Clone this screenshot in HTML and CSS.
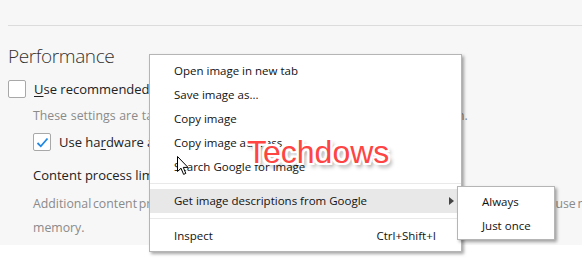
FILE: index.html
```html
<!DOCTYPE html>
<html lang="en">
<head>
    <meta charset="UTF-8">
    <title>Performance - Options</title>
    <link rel="stylesheet" href="styles.css">
</head>
<body>
    <div class="prefs">
        <div class="topbar"></div>

        <div class="content">
            <h2>Performance</h2>

            <label class="check-row first">
                <span class="box"></span>
                <span><u>U</u>se recommended performance settings</span>
            </label>
            <p class="hint single">These settings are tailored to your computer’s hardware and configuration.</p>

            <div class="sub">
                <label class="check-row">
                    <span class="box checked">
                        <svg width="13" height="11" viewBox="0 0 13 11"><path d="M1.5 6 L4.8 9.3 L11.5 1.5" fill="none" stroke="#1e88e5" stroke-width="1.8"/></svg>
                    </span>
                    <span>Use ha<u>r</u>dware acceleration when available</span>
                </label>

                <div class="label">Content process limit</div>
                <p class="hint wide">Additional content processes can improve performance when using multiple tabs, but will also use more memory.</p>
            </div>
        </div>
    </div>

    <div class="menu">
        <div class="item">Open image in new tab</div>
        <div class="item">Save image as...</div>
        <div class="item">Copy image</div>
        <div class="item">Copy image address</div>
        <div class="item">Search Google for image</div>
        <div class="sep"></div>
        <div class="item active">Get image descriptions from Google <span class="arrow"></span></div>
        <div class="sep"></div>
        <div class="item">Inspect <span class="key">Ctrl+Shift+I</span></div>
    </div>

    <div class="menu submenu">
        <div class="item">Always</div>
        <div class="item">Just once</div>
    </div>

    <div class="watermark">Techdows</div>

    <svg class="cursor" width="13" height="20" viewBox="0 0 13 20">
        <path d="M0.5 0.5 L0.5 15.5 L4 12.2 L6.6 18.4 L8.8 17.4 L6.3 11.4 L11 11.4 Z" fill="#fff" stroke="#000" stroke-width="1" stroke-linejoin="round"/>
    </svg>
</body>
</html>
```

FILE: styles.css
```css
body {
    margin: 0;
    width: 582px;
    height: 260px;
    overflow: hidden;
    position: relative;
    background: #fff;
    font-family: "Open Sans", "Noto Sans", sans-serif;
}
.prefs {
    width: 582px;
    height: 245px;
    overflow: hidden;
    background: #f7f7f7;
}
.topbar {
    height: 25px;
    margin-left: 8px;
    border-bottom: 1px solid #dcdcdc;
}
.content {
    padding-left: 8px;
}
h2 {
    margin: 0;
    padding-top: 16px;
    font-size: 19px;
    font-weight: 300;
    letter-spacing: -0.4px;
    line-height: 28px;
    color: #333;
}
.check-row {
    display: flex;
    align-items: center;
    gap: 8px;
    font-size: 13px;
    color: #222;
    height: 24px;
    margin-top: 2px;
    white-space: nowrap;
}
.check-row.first {
    margin-top: 7px;
}
.check-row u {
    text-decoration-thickness: 1px;
    text-underline-offset: 2px;
}
.box {
    width: 16px;
    height: 16px;
    border: 1px solid #a8a8a8;
    border-radius: 2px;
    background: #fff;
    display: flex;
    align-items: center;
    justify-content: center;
    flex: none;
}
.hint {
    margin: 3px 0 0;
    padding-left: 25px;
    font-size: 12.3px;
    line-height: 24px;
    color: #8a8a8a;
}
.hint.single {
    white-space: nowrap;
    word-spacing: 0.6px;
}
.sub {
    padding-left: 25px;
}
.sub .hint {
    padding-left: 0;
    margin-top: 5px;
}
.hint.wide {
    width: 590px;
    word-spacing: -1.5px;
}
.label {
    font-size: 13px;
    color: #222;
    margin-top: 9px;
    line-height: 24px;
}

.menu {
    position: absolute;
    left: 149px;
    top: 54px;
    width: 311px;
    padding: 4px 0 3px;
    background: #fff;
    border: 1px solid #b5b5b5;
    box-shadow: 2px 2px 3px rgba(0,0,0,0.35);
    font-size: 11.5px;
    color: #111;
    white-space: nowrap;
}
.item {
    height: 24px;
    line-height: 24px;
    padding: 0 25px 0 24px;
    display: flex;
    justify-content: space-between;
    align-items: center;
}
.item.active {
    background: #e8e8e9;
}
.sep {
    height: 1px;
    background: #e9e9e9;
    margin: 4px 0 5px;
}
.sep + .item.active + .sep {
    margin-top: 5px;
}
.arrow {
    width: 0;
    height: 0;
    border-left: 5px solid #444;
    border-top: 4px solid transparent;
    border-bottom: 4px solid transparent;
    margin-right: -18px;
}
.submenu {
    left: 457px;
    top: 186px;
    width: 96px;
    padding: 3px 0 1px;
}
.submenu .item {
    padding-left: 24px;
}
.watermark {
    position: absolute;
    left: 247px;
    top: 132px;
    font-family: "Liberation Sans", Arial, sans-serif;
    font-size: 32px;
    line-height: 40px;
    color: #ff4444;
    text-shadow:
        -2px -2px 0 #fff, 2px -2px 0 #fff, -2px 2px 0 #fff, 2px 2px 0 #fff,
        0 -2px 0 #fff, 0 2px 0 #fff, -2px 0 0 #fff, 2px 0 0 #fff,
        3px 4px 4px rgba(0,0,0,0.45);
}
.cursor {
    position: absolute;
    left: 177px;
    top: 156px;
}
```
